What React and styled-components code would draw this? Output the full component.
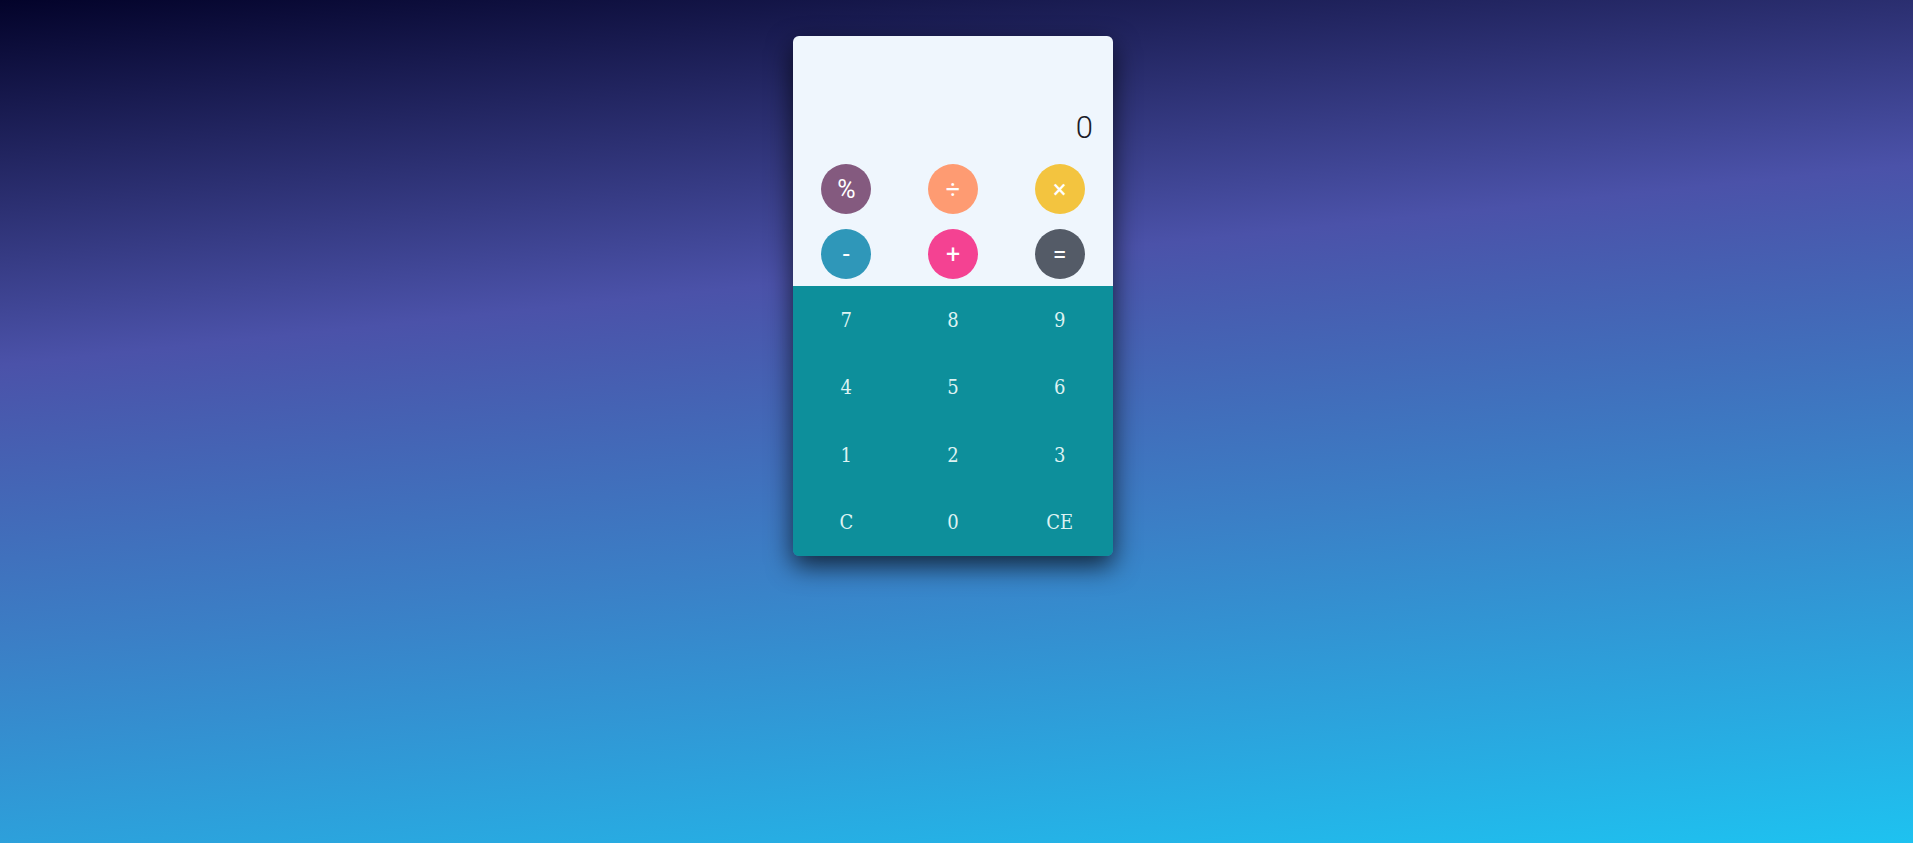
import React, { useState } from "react";
import styled, { createGlobalStyle } from "styled-components";

const GlobalStyle = createGlobalStyle`
  html, body {
    margin: 0;
    padding: 0;
    height: 100%;
  }
  body {
    background: linear-gradient(174deg, #03032a 0%, #4b52a9 35%, #3b7fc6 62%, #1ec2f0 100%);
    font-family: Roboto, "Noto Sans", sans-serif;
  }
  #root {
    min-height: 100vh;
  }
`;

const Page = styled.div`
  min-height: 100vh;
  display: flex;
  justify-content: center;
  align-items: flex-start;
  padding: 36px 7px 0 0;
  box-sizing: border-box;
`;

const Card = styled.div`
  width: 320px;
  border-radius: 6px;
  overflow: hidden;
  display: flex;
  flex-direction: column;
  box-shadow: 0 10px 26px rgba(0, 0, 0, 0.7);
`;

const Top = styled.div`
  background-color: #eff6fd;
  padding-bottom: 7px;
`;

const Display = styled.div`
  height: 128px;
  box-sizing: border-box;
  padding: 0 20px 21px;
  display: flex;
  justify-content: flex-end;
  align-items: flex-end;
  font-family: Roboto, sans-serif;
  font-weight: 300;
  font-size: 31px;
  line-height: 30px;
  color: #1b1b29;
`;

const Operators = styled.div`
  display: grid;
  grid-template-columns: repeat(3, 1fr);
  grid-auto-rows: 50px;
  row-gap: 15px;
  justify-items: center;
`;

const OpButton = styled.button`
  width: 50px;
  height: 50px;
  border: none;
  border-radius: 50%;
  background-color: ${(p) => p.$color};
  color: #ffffff;
  font-family: Roboto, sans-serif;
  font-size: 25px;
  font-weight: 400;
  display: flex;
  align-items: center;
  justify-content: center;
  padding: 0;
  cursor: pointer;
`;

const Keypad = styled.div`
  background-color: #0d8f9b;
  display: grid;
  grid-template-columns: repeat(3, 1fr);
  grid-template-rows: repeat(4, 67.5px);
`;

const Key = styled.button`
  border: none;
  background: transparent;
  color: #ddf2f2;
  font-family: "DejaVu Serif Condensed", "DejaVu Serif", serif;
  font-size: 20px;
  display: flex;
  align-items: center;
  justify-content: center;
  padding: 0;
  cursor: pointer;
`;

const operators = [
  { label: "%", color: "#845a7f" },
  { label: "÷", color: "#fe9b72" },
  { label: "×", color: "#f3c43f" },
  { label: "-", color: "#2f97b9" },
  { label: "+", color: "#f44292" },
  { label: "=", color: "#545b67" },
];

const keys = ["7", "8", "9", "4", "5", "6", "1", "2", "3", "C", "0", "CE"];

export default function App() {
  const [value, setValue] = useState("0");

  function handleKey(k) {
    if (k === "C" || k === "CE") {
      setValue("0");
      return;
    }
    setValue((v) => (v === "0" ? k : v + k));
  }

  return (
    <>
      <GlobalStyle />
      <Page>
        <Card>
          <Top>
            <Display>{value}</Display>
            <Operators>
              {operators.map((op) => (
                <OpButton key={op.label} $color={op.color}>
                  {op.label}
                </OpButton>
              ))}
            </Operators>
          </Top>
          <Keypad>
            {keys.map((k) => (
              <Key key={k} onClick={() => handleKey(k)}>
                {k}
              </Key>
            ))}
          </Keypad>
        </Card>
      </Page>
    </>
  );
}
